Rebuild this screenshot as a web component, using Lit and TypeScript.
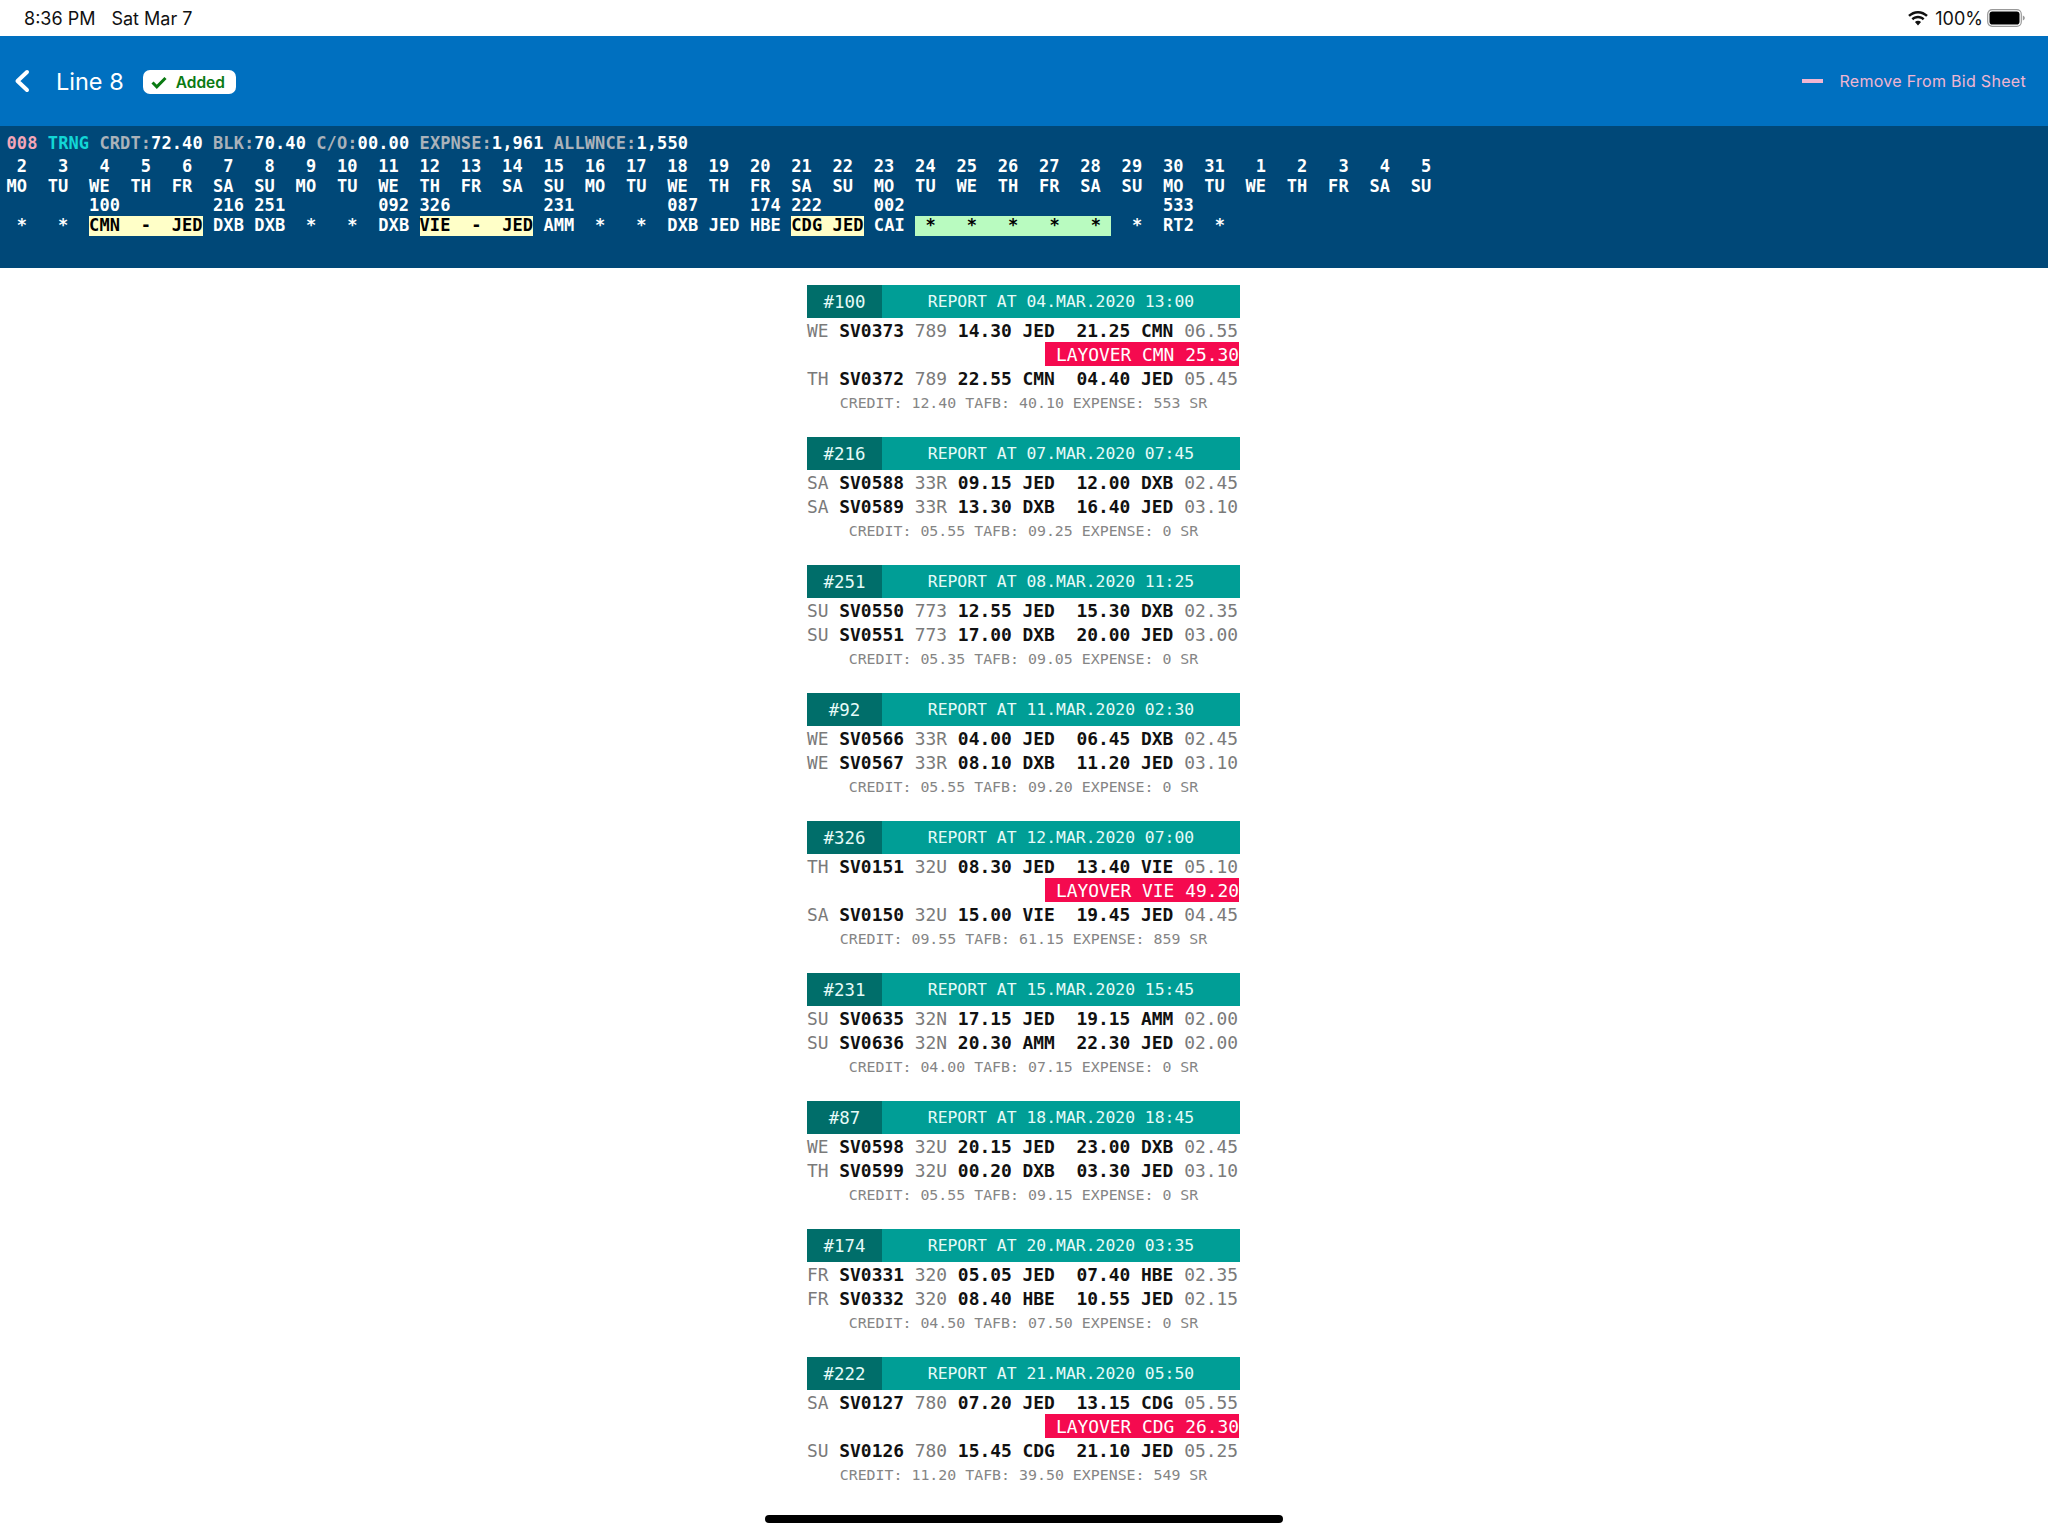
import { LitElement, html, css, nothing } from "lit";
import { customElement } from "lit/decorators.js";

const MONO = css`"DejaVu Sans Mono", "Liberation Mono", monospace`;

const WEEK = ["MO", "TU", "WE", "TH", "FR", "SA", "SU"];
const DATES = [...Array(30).keys()].map((i) => i + 2).concat([1, 2, 3, 4, 5]);
const PAIRINGS: Record<number, string> = {
  2: "100", 5: "216", 6: "251", 9: "092", 10: "326", 13: "231",
  16: "087", 18: "174", 19: "222", 21: "002", 28: "533",
};

type Leg = [string, string, string, string, string, string, string, string];
type Trip = {
  id: string;
  report: string;
  legs: Leg[];
  layover?: string;
  credit: string;
};

const TRIPS: Trip[] = [
  {
    id: "#100", report: "04.MAR.2020 13:00", layover: "LAYOVER CMN 25.30",
    legs: [
      ["WE", "SV0373", "789", "14.30", "JED", "21.25", "CMN", "06.55"],
      ["TH", "SV0372", "789", "22.55", "CMN", "04.40", "JED", "05.45"],
    ],
    credit: "CREDIT: 12.40 TAFB: 40.10 EXPENSE: 553 SR",
  },
  {
    id: "#216", report: "07.MAR.2020 07:45",
    legs: [
      ["SA", "SV0588", "33R", "09.15", "JED", "12.00", "DXB", "02.45"],
      ["SA", "SV0589", "33R", "13.30", "DXB", "16.40", "JED", "03.10"],
    ],
    credit: "CREDIT: 05.55 TAFB: 09.25 EXPENSE: 0 SR",
  },
  {
    id: "#251", report: "08.MAR.2020 11:25",
    legs: [
      ["SU", "SV0550", "773", "12.55", "JED", "15.30", "DXB", "02.35"],
      ["SU", "SV0551", "773", "17.00", "DXB", "20.00", "JED", "03.00"],
    ],
    credit: "CREDIT: 05.35 TAFB: 09.05 EXPENSE: 0 SR",
  },
  {
    id: "#92", report: "11.MAR.2020 02:30",
    legs: [
      ["WE", "SV0566", "33R", "04.00", "JED", "06.45", "DXB", "02.45"],
      ["WE", "SV0567", "33R", "08.10", "DXB", "11.20", "JED", "03.10"],
    ],
    credit: "CREDIT: 05.55 TAFB: 09.20 EXPENSE: 0 SR",
  },
  {
    id: "#326", report: "12.MAR.2020 07:00", layover: "LAYOVER VIE 49.20",
    legs: [
      ["TH", "SV0151", "32U", "08.30", "JED", "13.40", "VIE", "05.10"],
      ["SA", "SV0150", "32U", "15.00", "VIE", "19.45", "JED", "04.45"],
    ],
    credit: "CREDIT: 09.55 TAFB: 61.15 EXPENSE: 859 SR",
  },
  {
    id: "#231", report: "15.MAR.2020 15:45",
    legs: [
      ["SU", "SV0635", "32N", "17.15", "JED", "19.15", "AMM", "02.00"],
      ["SU", "SV0636", "32N", "20.30", "AMM", "22.30", "JED", "02.00"],
    ],
    credit: "CREDIT: 04.00 TAFB: 07.15 EXPENSE: 0 SR",
  },
  {
    id: "#87", report: "18.MAR.2020 18:45",
    legs: [
      ["WE", "SV0598", "32U", "20.15", "JED", "23.00", "DXB", "02.45"],
      ["TH", "SV0599", "32U", "00.20", "DXB", "03.30", "JED", "03.10"],
    ],
    credit: "CREDIT: 05.55 TAFB: 09.15 EXPENSE: 0 SR",
  },
  {
    id: "#174", report: "20.MAR.2020 03:35",
    legs: [
      ["FR", "SV0331", "320", "05.05", "JED", "07.40", "HBE", "02.35"],
      ["FR", "SV0332", "320", "08.40", "HBE", "10.55", "JED", "02.15"],
    ],
    credit: "CREDIT: 04.50 TAFB: 07.50 EXPENSE: 0 SR",
  },
  {
    id: "#222", report: "21.MAR.2020 05:50", layover: "LAYOVER CDG 26.30",
    legs: [
      ["SA", "SV0127", "780", "07.20", "JED", "13.15", "CDG", "05.55"],
      ["SU", "SV0126", "780", "15.45", "CDG", "21.10", "JED", "05.25"],
    ],
    credit: "CREDIT: 11.20 TAFB: 39.50 EXPENSE: 549 SR",
  },
];

@customElement("app-root")
export class AppRoot extends LitElement {
  static styles = css`
    :host {
      display: block;
      position: relative;
      height: 1535px;
      background: #fff;
      overflow: hidden;
      font-family: Inter, "Liberation Sans", sans-serif;
    }
    .status {
      height: 36px;
      display: flex;
      align-items: center;
      padding: 0 23px 0 24px;
      font-size: 18px;
      color: #111;
    }
    .status .date {
      margin-left: 16px;
    }
    .status .right {
      margin-left: auto;
      display: flex;
      align-items: center;
    }
    .status .pct {
      margin: 0 4px 0 6px;
    }
    .nav {
      height: 90px;
      background: #0070c0;
      display: flex;
      align-items: center;
      padding: 0 22px 0 14px;
      color: #fff;
    }
    .nav .title {
      font-size: 23.5px;
      margin-left: 26px;
    }
    .badge {
      display: flex;
      align-items: center;
      gap: 9px;
      height: 24px;
      width: 93px;
      box-sizing: border-box;
      padding-left: 8px;
      margin: 2px 0 0 19px;
      background: #fff;
      border-radius: 7px;
      color: #0a7a12;
      font-size: 15.5px;
      font-weight: 600;
    }
    .remove {
      margin-left: auto;
      display: flex;
      align-items: center;
      gap: 16px;
      color: #f0b6d2;
      font-size: 16px;
      letter-spacing: 0.3px;
    }
    .remove i {
      display: block;
      width: 21px;
      height: 4px;
      background: #f0b6d2;
    }
    .calendar {
      height: 142px;
      box-sizing: border-box;
      background: #004878;
      padding: 8px 0 0 6.5px;
      font-family: ${MONO};
      font-size: 17px;
      letter-spacing: 0.09px;
      font-weight: 700;
      color: #fff;
    }
    .calendar div {
      height: 19.4px;
      line-height: 19.4px;
      white-space: pre;
    }
    .calendar .summary {
      margin-bottom: 4px;
    }
    .pink { color: #f4a6b8; }
    .cyan { color: #12d6d6; }
    .label { color: #aab2ba; }
    .hl-y,
    .hl-g {
      display: inline-block;
      color: #000;
      height: 20px;
    }
    .hl-y { background: #ffffc8; }
    .hl-g { background: #b9fbc0; }
    .trips {
      display: flex;
      flex-direction: column;
      align-items: center;
      gap: 21px;
      padding: 17px 1px 0 0;
      font-family: ${MONO};
    }
    .trip {
      width: 433px;
    }
    .trip-head {
      display: flex;
      height: 33px;
      line-height: 34px;
      background: #009e96;
      color: #e6fbf8;
      text-align: center;
    }
    .trip-head .id {
      width: 75px;
      background: #006e6a;
      font-size: 17.4px;
    }
    .trip-head .report {
      flex: 1;
      font-size: 16.4px;
    }
    .leg {
      height: 24px;
      line-height: 25px;
      font-size: 17.9px;
      white-space: pre;
      color: #111;
      font-weight: 700;
    }
    .leg .dim {
      color: #7a7a7a;
      font-weight: 400;
    }
    .layover {
      height: 24px;
      display: flex;
      justify-content: flex-end;
      margin-right: 1px;
    }
    .layover span {
      padding-left: 11px;
      background: #f50a4f;
      color: #fff;
      font-size: 17.9px;
      line-height: 25px;
      height: 24px;
    }
    .credit {
      height: 26px;
      line-height: 26px;
      text-align: center;
      font-size: 14.9px;
      color: #858585;
    }
    .home {
      position: absolute;
      left: 765px;
      top: 1515px;
      width: 518px;
      height: 8px;
      border-radius: 4px;
      background: #000;
    }
  `;

  private cell(s: string) {
    return s.padEnd(4, " ");
  }

  private renderCalendar() {
    const stars = (n: number) => " *  ".repeat(n);
    return html`<div class="calendar">
      <div class="summary"><span class="pink">008</span> <span class="cyan">TRNG</span> <span class="label">CRDT:</span>72.40 <span class="label">BLK:</span>70.40 <span class="label">C/O:</span>00.00 <span class="label">EXPNSE:</span>1,961 <span class="label">ALLWNCE:</span>1,550</div>
      <div>${DATES.map((d) => this.cell(String(d).padStart(2, " "))).join("")}</div>
      <div>${DATES.map((_, i) => this.cell(WEEK[i % 7])).join("")}</div>
      <div>${DATES.map((_, i) => this.cell(PAIRINGS[i] ?? "")).join("")}</div>
      <div>${stars(2)}<span class="hl-y">CMN  -  JED</span> DXB DXB ${stars(2)}DXB <span class="hl-y">VIE  -  JED</span> AMM ${stars(2)}DXB JED HBE <span class="hl-y">CDG JED</span> CAI <span class="hl-g"> *   *   *   *   * </span> ${stars(1)}RT2 ${stars(1)}</div>
    </div>`;
  }

  private renderLeg(l: Leg) {
    return html`<div class="leg"><span class="dim">${l[0]}</span> ${l[1]} <span class="dim">${l[2]}</span> ${l[3]} ${l[4]}  ${l[5]} ${l[6]} <span class="dim">${l[7]}</span></div>`;
  }

  private renderTrip(t: Trip) {
    return html`<section class="trip">
      <div class="trip-head">
        <div class="id">${t.id}</div>
        <div class="report">REPORT AT ${t.report}</div>
      </div>
      ${this.renderLeg(t.legs[0])}
      ${t.layover ? html`<div class="layover"><span>${t.layover}</span></div>` : nothing}
      ${this.renderLeg(t.legs[1])}
      <div class="credit">${t.credit}</div>
    </section>`;
  }

  render() {
    return html`
      <div class="status">
        <span>8:36 PM</span><span class="date">Sat Mar 7</span>
        <div class="right">
          <svg width="22" height="17" viewBox="0 0 21 16" fill="#111">
            <path d="M10.5 3.2c3 0 5.700 1.200 7.800 3.200l1.600-1.700C17.400 2.300 14.100.8 10.500.8S3.600 2.300 1.100 4.700l1.600 1.700c2.100-2 4.800-3.200 7.800-3.200z" />
            <path d="M10.500 7.800c1.700 0 3.300.7 4.500 1.800l1.700-1.700c-1.600-1.500-3.800-2.500-6.200-2.500s-4.600 1-6.200 2.500L6 9.600c1.200-1.100 2.800-1.800 4.500-1.800z" />
            <path d="M10.500 10.200c-1.100 0-2.100.4-2.900 1.100l2.900 3.400 2.900-3.400c-.8-.7-1.800-1.100-2.900-1.100z" />
          </svg>
          <span class="pct">100%</span>
          <svg width="38" height="18" viewBox="0 0 38 18">
            <rect x="0.700" y="0.700" width="33.600" height="16.600" rx="4.500" fill="none" stroke="#999" stroke-width="1.200" />
            <rect x="2.500" y="2.500" width="30" height="13" rx="2.800" fill="#000" />
            <path d="M35.800 6.500c1.200.4 2 1.400 2 2.500s-.8 2.100-2 2.500z" fill="#999" />
          </svg>
        </div>
      </div>
      <div class="nav">
        <svg width="16" height="24" viewBox="0 0 16 24" fill="none" stroke="#fff" stroke-width="4" stroke-linecap="round" stroke-linejoin="round">
          <path d="M13 3 3.500 12 13 21" />
        </svg>
        <span class="title">Line 8</span>
        <div class="badge">
          <svg width="16" height="13" viewBox="0 0 16 13" fill="none" stroke="#0a7a12" stroke-width="3">
            <path d="M1.500 6.500 5.800 10.800 14.500 2" />
          </svg>
          Added
        </div>
        <div class="remove"><i></i>Remove From Bid Sheet</div>
      </div>
      ${this.renderCalendar()}
      <div class="trips">${TRIPS.map((t) => this.renderTrip(t))}</div>
      <div class="home"></div>
    `;
  }
}
